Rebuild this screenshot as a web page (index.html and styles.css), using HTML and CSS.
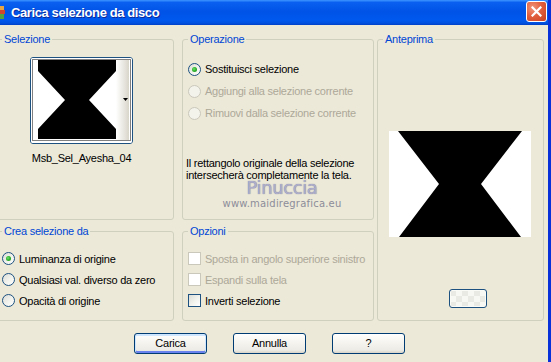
FILE: index.html
```html
<!DOCTYPE html>
<html lang="it">
<head>
<meta charset="utf-8">
<title>Carica selezione da disco</title>
<link rel="stylesheet" href="styles.css">
</head>
<body>
<div class="window">
  <div class="titlebar">
    <svg class="app-icon" width="6" height="13" viewBox="0 0 6 13">
      <rect x="0" y="0" width="4" height="4" fill="#E9A443"/>
      <rect x="0" y="4" width="5" height="4" fill="#D1452F"/>
      <rect x="0" y="8" width="4" height="5" fill="#4FA23F"/>
    </svg>
    <span class="title">Carica selezione da disco</span>
    <span class="close">
      <svg width="11" height="11" viewBox="0 0 11 11"><path d="M1.5 1.5 L9.5 9.5 M9.5 1.5 L1.5 9.5" stroke="#fff" stroke-width="2.2" stroke-linecap="square"/></svg>
    </span>
  </div>
  <div class="client">
    <div class="groups">
      <section class="group g-sel">
        <span class="legend">Selezione</span>
        <div class="thumb-wrap">
          <div class="thumb">
            <svg width="101" height="85" viewBox="0 0 101 85">
              <defs>
                <linearGradient id="strip" x1="0" x2="1" y1="0" y2="0">
                  <stop offset="0" stop-color="#FFFFFF"/>
                  <stop offset="1" stop-color="#D8D5CA"/>
                </linearGradient>
              </defs>
              <rect width="101" height="85" fill="#fff"/>
              <polygon points="7,2 85,2 85,13 58,42 85,71 85,81 7,81 7,71 34,42 7,13" fill="#000"/>
              <rect x="85" y="2" width="13" height="80" fill="url(#strip)"/>
              <polygon points="92,40 97,40 94.5,43" fill="#000"/>
              <rect x="1.5" y="1.5" width="98" height="81" fill="none" stroke="#000" stroke-dasharray="1 1"/>
            </svg>
          </div>
          <div class="sel-name">Msb_Sel_Ayesha_04</div>
        </div>
      </section>

      <section class="group g-op">
        <span class="legend">Operazione</span>
        <div class="opt-list rows22">
          <div class="opt"><span class="radio checked"></span><span>Sostituisci selezione</span></div>
          <div class="opt disabled"><span class="radio"></span><span>Aggiungi alla selezione corrente</span></div>
          <div class="opt disabled"><span class="radio"></span><span>Rimuovi dalla selezione corrente</span></div>
        </div>
        <p class="desc">Il rettangolo originale della selezione<br>intersecherà completamente la tela.</p>
      </section>

      <section class="group g-prev">
        <span class="legend">Anteprima</span>
        <svg class="preview" width="142" height="106" viewBox="0 0 142 106">
          <rect width="142" height="106" fill="#fff"/>
          <polygon points="9,0 133,0 92,53 132,106 10,106 50,53" fill="#000"/>
        </svg>
        <span class="mini-btn"></span>
      </section>

      <section class="group g-crea">
        <span class="legend">Crea selezione da</span>
        <div class="opt-list rows21">
          <div class="opt"><span class="radio checked"></span><span>Luminanza di origine</span></div>
          <div class="opt"><span class="radio"></span><span>Qualsiasi val. diverso da zero</span></div>
          <div class="opt"><span class="radio"></span><span>Opacità di origine</span></div>
        </div>
      </section>

      <section class="group g-opt">
        <span class="legend">Opzioni</span>
        <div class="opt-list rows21">
          <div class="opt disabled"><span class="check"></span><span>Sposta in angolo superiore sinistro</span></div>
          <div class="opt disabled"><span class="check"></span><span>Espandi sulla tela</span></div>
          <div class="opt"><span class="check"></span><span>Inverti selezione</span></div>
        </div>
      </section>
    </div>

    <div class="buttons">
      <button class="btn default">Carica</button>
      <button class="btn">Annulla</button>
      <button class="btn">?</button>
    </div>
  </div>

  <div class="watermark">
    <div class="wm-name">Pinuccia</div>
    <div class="wm-url">www.maidiregrafica.eu</div>
  </div>
</div>
</body>
</html>
```

FILE: styles.css
```css
* { box-sizing: border-box; }

html, body {
  margin: 0;
  padding: 0;
}

body {
  width: 551px;
  height: 362px;
  overflow: hidden;
  background: #ECE9D8;
  font-family: "Liberation Sans", Arial, sans-serif;
  font-size: 11px;
  letter-spacing: -0.25px;
  color: #000;
}

.window {
  position: relative;
  width: 551px;
  height: 362px;
  display: flex;
  flex-direction: column;
  border-right: 3px solid #0831D9;
  background: #ECE9D8;
  overflow: hidden;
}

/* ---------- title bar ---------- */
.titlebar {
  flex: none;
  height: 25px;
  display: flex;
  align-items: center;
  background: linear-gradient(180deg, #3D95FF 0%, #0A5FF0 10%, #0053E6 45%, #0058EE 80%, #0052E0 92%, #0040C8 100%);
}

.app-icon {
  flex: none;
  display: block;
}

.title {
  margin-left: 5px;
  color: #fff;
  font-weight: bold;
  font-size: 13px;
  line-height: 15px;
  letter-spacing: -0.4px;
  text-shadow: 1px 1px 0 #0C2A9A;
}

.close {
  margin-left: auto;
  margin-right: 1px;
  align-self: flex-start;
  margin-top: 1px;
  width: 21px;
  height: 21px;
  border: 1px solid #fff;
  border-radius: 3px;
  display: flex;
  align-items: center;
  justify-content: center;
  background: radial-gradient(circle at 30% 30%, #F0957A 0%, #E2603F 45%, #C8401F 100%);
}

.close svg { display: block; }

/* ---------- client ---------- */
.client {
  flex: 1;
  display: flex;
  flex-direction: column;
  padding-top: 14px;
}

.groups {
  display: grid;
  grid-template-columns: 178px 8px 192px 3px 167px;
  grid-template-rows: 181px 90px;
  row-gap: 11px;
  margin-left: -4px;
}

.group {
  position: relative;
  border: 1px solid #D0D0BF;
  border-radius: 3px;
}

.legend {
  position: absolute;
  top: -7px;
  left: 5px;
  padding: 0 2px;
  background: #ECE9D8;
  color: #0046D5;
  line-height: 13px;
  white-space: nowrap;
}

.g-sel  { grid-column: 1; grid-row: 1; padding: 17px 0 0 33px; }
.g-op   { grid-column: 3; grid-row: 1; padding: 18px 0 0 3px; }
.g-prev { grid-column: 5; grid-row: 1 / span 2; padding: 91px 0 0 11px; display: flex; flex-direction: column; align-items: flex-start; }
.g-crea { grid-column: 1; grid-row: 2; padding: 16px 0 0 5px; }
.g-opt  { grid-column: 3; grid-row: 2; padding: 16px 0 0 5px; }

/* selezione */
.thumb-wrap {
  width: 103px;
  display: flex;
  flex-direction: column;
  align-items: center;
}

.thumb {
  width: 103px;
  height: 87px;
  border: 1px solid #1C5180;
  border-radius: 3px;
  overflow: hidden;
  background: #fff;
}

.thumb svg { display: block; }

.sel-name {
  margin-top: 8px;
  line-height: 13px;
  white-space: nowrap;
}

/* option lists */
.opt-list {
  display: flex;
  flex-direction: column;
}

.g-op .opt-list { margin-left: 2px; }

.opt {
  display: flex;
  align-items: center;
  gap: 4px;
  white-space: nowrap;
}

.rows22 .opt { height: 22px; }
.rows21 .opt { height: 21px; }

.opt.disabled { color: #ACA899; }

.radio {
  flex: none;
  width: 13px;
  height: 13px;
  border-radius: 50%;
  border: 1px solid #1C5180;
  background: linear-gradient(135deg, #DCDCD7 0%, #F2F2EE 55%, #FFFFFF 100%);
  display: flex;
  align-items: center;
  justify-content: center;
}

.radio.checked::after {
  content: "";
  width: 5px;
  height: 5px;
  border-radius: 50%;
  background: radial-gradient(circle at 40% 40%, #6EE06A 0%, #2BB12B 50%, #1A8F1A 100%);
}

.disabled .radio {
  border-color: #CAC8BB;
  background: #F3F2EB;
}

.check {
  flex: none;
  width: 13px;
  height: 13px;
  border: 1px solid #1C5180;
  background: linear-gradient(135deg, #DCDCD7 0%, #F2F2EE 55%, #FFFFFF 100%);
}

.disabled .check {
  border-color: #CAC8BB;
  background: #FFFFFF;
}

.desc {
  margin: 33px 0 0 0;
  line-height: 12px;
  white-space: nowrap;
}

/* anteprima */
.preview { display: block; }

.mini-btn {
  margin-top: 52px;
  margin-left: 60px;
  width: 38px;
  height: 19px;
  border: 1px solid #1C5180;
  border-radius: 3px;
  background:
    repeating-conic-gradient(#F7F7F4 0% 25%, #EAEAE5 0% 50%) 0 0 / 12px 12px;
  box-shadow: inset 0 0 0 1px #FAFAF6;
}

/* buttons */
.buttons {
  display: flex;
  gap: 26px;
  margin-top: 12px;
  padding-left: 134px;
}

.btn {
  width: 73px;
  height: 21px;
  padding: 0;
  border: 1px solid #003C74;
  border-radius: 3px;
  background: linear-gradient(180deg, #FFFFFF 0%, #F5F4EF 45%, #ECEBE5 85%, #D8D3C8 100%);
  font-family: inherit;
  font-size: 11px;
  letter-spacing: -0.25px;
  color: #000;
  line-height: 19px;
  text-align: center;
}

.btn.default {
  box-shadow: inset 0 1px 0 1px #CEE7FF, inset 0 -1px 0 1px #6982EE;
}

/* watermark overlay */
.watermark {
  position: absolute;
  left: 222px;
  top: 182px;
  width: 120px;
  text-align: center;
  letter-spacing: 0;
}

.wm-name {
  font-family: "DejaVu Sans", sans-serif;
  font-size: 18px;
  line-height: 12px;
  height: 16px;
  letter-spacing: -0.4px;
  color: #AEAECB;
  text-shadow: 0 0 1px #6C6C92;
}

.wm-url {
  font-family: "DejaVu Sans", sans-serif;
  font-size: 10px;
  line-height: 12px;
  letter-spacing: 0.2px;
  color: #8D8D9A;
}
```
